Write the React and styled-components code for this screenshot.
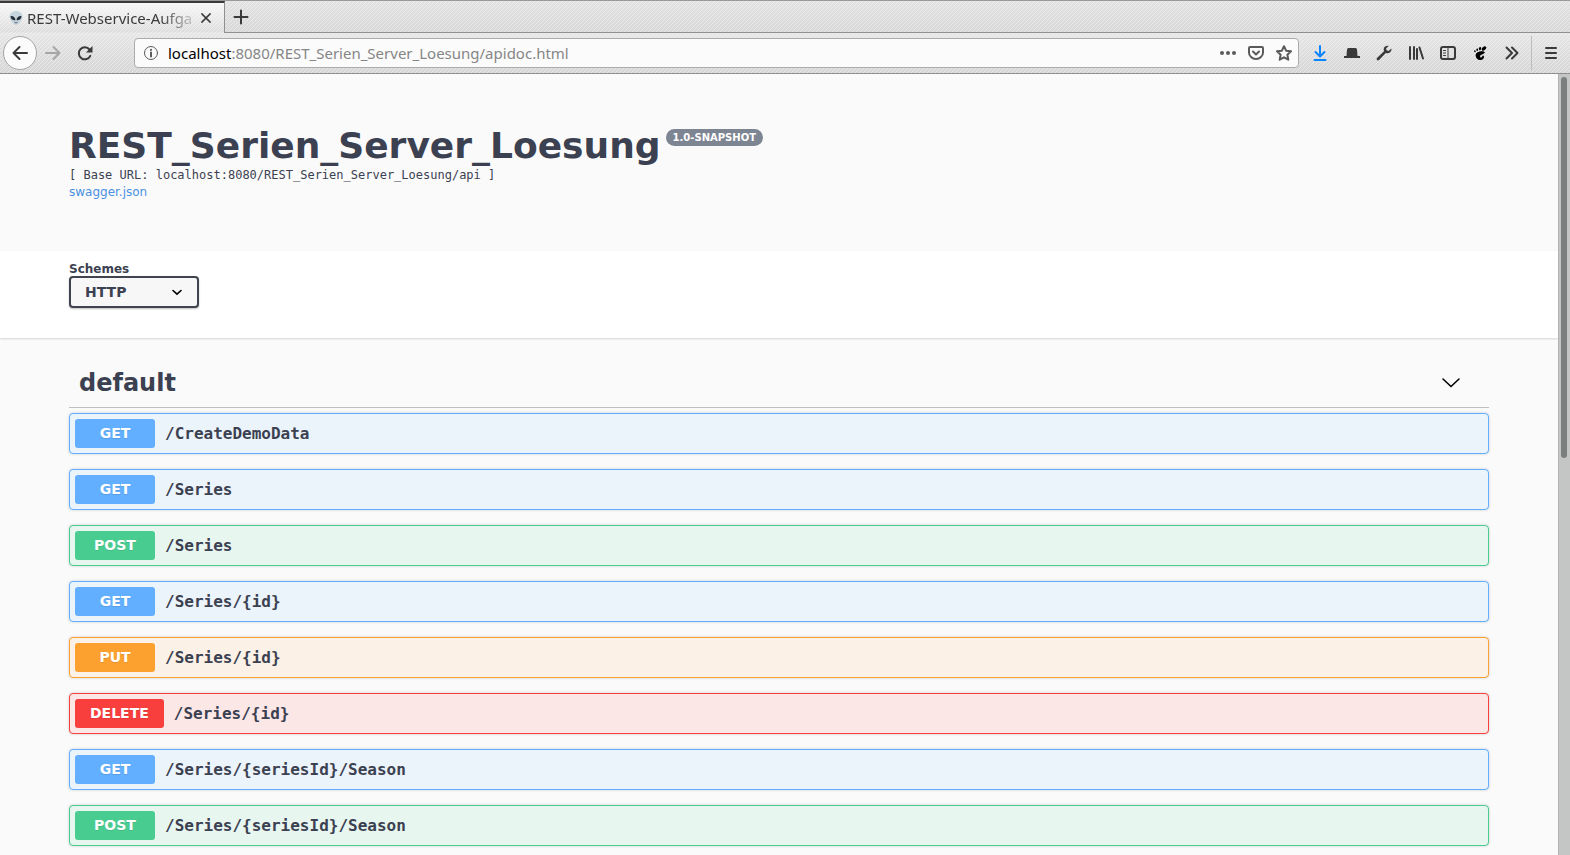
import React from "react";
import styled, { createGlobalStyle } from "styled-components";

const sans = '"DejaVu Sans", sans-serif';
const mono = '"DejaVu Sans Mono", monospace';
const chromeFont = '"Noto Sans", sans-serif';

const GlobalStyle = createGlobalStyle`
  *, *::before, *::after { box-sizing: border-box; }
  body { margin: 0; background: #fafafa; color: #3b4151; font-family: ${sans}; overflow: hidden; }
  h1, h2, p { margin: 0; }
  button { border: 0; padding: 0; background: none; color: inherit; font: inherit; cursor: pointer; }
  svg { display: block; flex: none; }
`;

const Browser = styled.div`
  height: 100vh;
  display: flex;
  flex-direction: column;
`;

const Chrome = styled.header`
  flex: none;
  color: #3a3a3a;
  font-family: ${chromeFont};
  border-bottom: 1px solid #8f8f8f;
  background:
    linear-gradient(135deg, transparent 40%, rgba(255, 255, 255, 0.4) 40% 60%, transparent 60%) 0 0 / 4px 4px,
    linear-gradient(#e2e2e2, #d8d8d8 32px, #e6e6e6 33px, #d6d6d6);
`;

const TabStrip = styled.div`
  display: flex;
  height: 33px;
  border-top: 1px solid #9a9a9a;
`;

const Tab = styled.div`
  width: 225px;
  display: flex;
  align-items: center;
  gap: 4px;
  padding: 0 10px 0 9px;
  border-top: 2px solid #3a3a3a;
  border-right: 1px solid #8f8f8f;
  background: linear-gradient(rgba(255, 255, 255, 0.7), rgba(255, 255, 255, 0.1));
`;

const TabTitle = styled.span`
  flex: 1;
  min-width: 0;
  white-space: nowrap;
  font-size: 15px;
  line-height: 20px;
  mask-image: linear-gradient(to right, #000 132px, transparent 174px);
`;

const TabTools = styled.div`
  flex: 1;
  display: flex;
  align-items: center;
  padding-left: 7px;
  border-bottom: 1px solid #8f8f8f;
`;

const IconButton = styled.button`
  display: grid;
  place-items: center;
  width: ${(p) => p.$width || 32}px;
  height: 32px;
  color: ${(p) => p.$color || "#3a3a3a"};
`;

const TabClose = styled(IconButton)`
  width: 16px;
  height: 20px;
`;

const NavBar = styled.div`
  display: flex;
  align-items: center;
  height: 40px;
  padding: 0 3px;
`;

const BackButton = styled(IconButton)`
  width: 34px;
  height: 34px;
  border: 1px solid #a5a5a5;
  border-radius: 50%;
  background: #fbfbfb;
`;

const AddressBar = styled.div`
  flex: 1;
  min-width: 0;
  display: flex;
  align-items: center;
  height: 30px;
  margin: 0 5px 0 33px;
  padding-left: 8px;
  border: 1px solid #ababab;
  border-radius: 4px;
  background: #fbfbfb;
  color: #5a5a5a;
`;

const Address = styled.p`
  flex: 1;
  min-width: 0;
  overflow: hidden;
  white-space: nowrap;
  margin-left: 9px;
  font-size: 15px;
  line-height: 20px;
  color: #868686;

  b { font-weight: 400; color: #000; }
`;

const Divider = styled.span`
  width: 1px;
  height: 34px;
  margin: 0 3px;
  background: #bcbcbc;
`;

const Viewport = styled.div`
  flex: 1;
  min-height: 0;
  display: flex;
`;

const Page = styled.main`
  flex: 1;
  min-width: 0;
  overflow: hidden;
`;

const ScrollTrack = styled.div`
  width: 12px;
  flex: none;
  padding: 3px 2px 0;
  border-left: 1px solid #b2b4b3;
  background: #c4c6c5;
`;

const ScrollThumb = styled.div`
  width: 6px;
  height: 49%;
  border-radius: 3px;
  background: #7b7f7e;
`;

const Wrapper = styled.div`
  max-width: 1460px;
  margin: 0 auto;
  padding: 0 20px;
`;

const Info = styled(Wrapper)`
  padding-top: 50px;
  padding-bottom: 50px;
`;

const TitleRow = styled.div`
  display: flex;
  align-items: flex-start;
  gap: 5px;
`;

const Title = styled.h1`
  font-size: 36px;
  line-height: 43px;
`;

const Version = styled.span`
  margin-top: 5px;
  padding: 2px 7px;
  border-radius: 9px;
  background: #7d8492;
  color: #fff;
  font-size: 10px;
  font-weight: 700;
  line-height: 13px;
`;

const BaseUrl = styled.p`
  font-family: ${mono};
  font-size: 12px;
  line-height: 16px;
`;

const SpecLink = styled.a`
  display: block;
  width: fit-content;
  color: #4990e2;
  font-size: 12px;
  line-height: 18px;
  text-decoration: none;
`;

const SchemeBar = styled.section`
  padding: 12px 0 30px;
  background: #fff;
  box-shadow: 0 1px 2px rgba(0, 0, 0, 0.15);
`;

const SchemeLabel = styled.label`
  display: flex;
  flex-direction: column;
  align-items: flex-start;
  font-size: 12px;
  font-weight: 700;
  line-height: 13px;
`;

const SelectBox = styled.span`
  display: grid;
  align-items: center;

  > * { grid-area: 1 / 1; }
  > svg { justify-self: end; margin-right: 12px; pointer-events: none; }
`;

const Select = styled.select`
  width: 130px;
  height: 32px;
  padding: 0 14px;
  appearance: none;
  border: 2px solid #41444e;
  border-radius: 4px;
  background: #f7f7f7;
  box-shadow: 0 1px 2px rgba(0, 0, 0, 0.25);
  color: #3b4151;
  font: 700 14px ${sans};
`;

const TagHeader = styled.button`
  display: flex;
  align-items: center;
  justify-content: space-between;
  width: 100%;
  height: 50px;
  margin: 20px 0 5px;
  padding: 0 28px 0 10px;
  border-bottom: 1px solid #bfbfbf;
  text-align: left;
`;

const TagName = styled.h2`
  font-size: 24px;
  line-height: 30px;
`;

const OperationList = styled.div`
  display: flex;
  flex-direction: column;
  gap: 15px;
`;

const palette = {
  GET: ["#61affe", "#ebf3fb"],
  POST: ["#49cc90", "#e8f6f0"],
  PUT: ["#fca130", "#fbf1e6"],
  DELETE: ["#f93e3e", "#fce7e7"],
};

const OperationRow = styled.button`
  display: flex;
  align-items: center;
  gap: 10px;
  padding: 5px;
  border: 1px solid ${(p) => palette[p.$method][0]};
  border-radius: 4px;
  background: ${(p) => palette[p.$method][1]};
  box-shadow: 0 0 3px rgba(0, 0, 0, 0.19);
`;

const Method = styled.span`
  min-width: 80px;
  padding: 6px 15px;
  border-radius: 3px;
  background: ${(p) => palette[p.$method][0]};
  color: #fff;
  font-size: 14px;
  font-weight: 700;
  line-height: 17px;
  text-align: center;
  text-shadow: 0 1px 0 rgba(0, 0, 0, 0.1);
`;

const Path = styled.span`
  font-family: ${mono};
  font-size: 16px;
  font-weight: 700;
  line-height: 19px;
`;

const operations = [
  ["GET", "/CreateDemoData"],
  ["GET", "/Series"],
  ["POST", "/Series"],
  ["GET", "/Series/{id}"],
  ["PUT", "/Series/{id}"],
  ["DELETE", "/Series/{id}"],
  ["GET", "/Series/{seriesId}/Season"],
  ["POST", "/Series/{seriesId}/Season"],
];

const Icon = ({ size = 16, children, fill, width = 2 }) => (
  <svg
    width={size}
    height={size}
    viewBox="0 0 16 16"
    aria-hidden="true"
    fill={fill ? "currentColor" : "none"}
    stroke={fill ? "none" : "currentColor"}
    strokeWidth={width}
    strokeLinecap="round"
    strokeLinejoin="round"
  >
    {children}
  </svg>
);

const AlienIcon = () => (
  <svg width="14" height="14" viewBox="0 0 14 14" aria-hidden="true">
    <path d="M7 0C3 0 .5 2.400.5 5.700 .5 9 4.500 14 7 14s6.500-5 6.500-8.300C13.500 2.400 11 0 7 0z" fill="#c6d4dd" />
    <path d="M1.500 5.200c2.300-.5 4.700 1 5 4-2.700.4-4.900-1.200-5-4zM12.500 5.200c-2.300-.5-4.700 1-5 4 2.700.4 4.900-1.200 5-4z" fill="#263039" />
    <path d="M5.500 11.500q1.500.8 3 0" stroke="#5b6b76" fill="none" />
  </svg>
);

const toolbar = [
  ["Downloads", "#0a84ff", <Icon><path d="M8 1v10M3.500 7 8 11.500 12.500 7M2.500 15h11" /></Icon>],
  ["Extension", "#3a3a3a", <Icon fill><path d="M2.500 11 3 4.500Q3.100 3 4.500 3h7Q12.900 3 13 4.500l.5 6.500H16v2H0v-2z" /></Icon>],
  ["Developer tools", "#3a3a3a", <Icon fill><path d="M15.300 3.400 12.600 5.900 10.600 5.300 10.100 3.400 12.600.900C10.200.3 7.600 1.900 7.700 4.500L8 6.200 1 12.900C-.2 14.400 1.600 16.200 3.100 15L9.800 8.100C12.800 9.200 16.200 6.700 15.300 3.400z" /></Icon>],
  ["Library", "#3a3a3a", <Icon><path d="M2 2v12M6 2v12M9 4v10M11.500 2.500l3.500 11" /></Icon>],
  ["Sidebar", "#3a3a3a", <Icon><rect x="1" y="2" width="14" height="12" rx="2" /><path d="M8 2v12" strokeWidth="1" /><path d="M3.500 5.500h2M3.500 8h2M3.500 10.500h2" strokeWidth="1" /></Icon>],
  ["GNOME extensions", "#000", <Icon fill size={14}><ellipse cx="12.500" cy="2.800" rx="3" ry="1.900" transform="rotate(-40 12.500 2.800)" /><ellipse cx="8" cy="3" rx="1.200" ry="1.800" transform="rotate(15 8 3)" /><ellipse cx="4.800" cy="4.300" rx="1" ry="1.500" /><ellipse cx="2.200" cy="6" rx=".9" ry="1.200" transform="rotate(-20 2.200 6)" /><path d="M12.500 6.300C8.500 5 3 7 3 10.500 3 13.500 5.500 16 8.500 16c3 0 4.500-2.500 4-4.300-.4-1.200-1.800-.9-2 .2-.3 1.500-2.200 1.700-2.500.2C7.700 9.800 14 9 13.500 7.200z" /></Icon>],
  ["More tools", "#3a3a3a", <Icon><path d="M2.500 2.500 8 8l-5.500 5.500M8 2.500 13.500 8 8 13.500" /></Icon>],
];

export default function App() {
  return (
    <Browser>
      <GlobalStyle />
      <Chrome>
        <TabStrip>
          <Tab>
            <AlienIcon />
            <TabTitle>REST-Webservice-Aufga</TabTitle>
            <TabClose aria-label="Close tab">
              <Icon size={12}><path d="M2.500 2.500l11 11M13.500 2.500l-11 11" /></Icon>
            </TabClose>
          </Tab>
          <TabTools>
            <IconButton aria-label="New tab" $width={18}>
              <Icon><path d="M8 1.500v13M1.500 8h13" /></Icon>
            </IconButton>
          </TabTools>
        </TabStrip>
        <NavBar>
          <BackButton aria-label="Back"><Icon><path d="M15 8H1.500M7.500 2 1.500 8l6 6" /></Icon></BackButton>
          <IconButton aria-label="Forward" $color="#a6a6a6"><Icon><path d="M1 8h13.500M8.500 2l6 6-6 6" /></Icon></IconButton>
          <IconButton aria-label="Reload"><Icon><path d="M13.300 10.800A6 6 0 1 1 12.500 4.500" /><path d="M15.500 1v6.500H9z" fill="currentColor" stroke="none" /></Icon></IconButton>
          <AddressBar>
            <Icon width={1}><circle cx="8" cy="8" r="6.500" /><path d="M8 7.500v4M8 4.800v.2" strokeWidth="2" /></Icon>
            <Address><b>localhost</b>:8080/REST_Serien_Server_Loesung/apidoc.html</Address>
            <IconButton aria-label="Page actions" $width={28} $color="#5a5a5a"><Icon fill><circle cx="2" cy="8" r="2" /><circle cx="8" cy="8" r="2" /><circle cx="14" cy="8" r="2" /></Icon></IconButton>
            <IconButton aria-label="Save to Pocket" $width={28} $color="#5a5a5a"><Icon><path d="M2 2h12q1 0 1 1v4.500a7 6.500 0 0 1-14 0V3q0-1 1-1z" /><path d="M5 6.500 8 9.500l3-3" /></Icon></IconButton>
            <IconButton aria-label="Bookmark" $width={28} $color="#5a5a5a"><Icon><path d="m8 1.200 2.100 4.500 4.900.6-3.600 3.400.9 5L8 12.300l-4.300 2.400.9-5L1 6.300l4.900-.6z" /></Icon></IconButton>
          </AddressBar>
          {toolbar.map(([label, color, icon]) => (
            <IconButton key={label} aria-label={label} $color={color}>{icon}</IconButton>
          ))}
          <Divider />
          <IconButton aria-label="Menu"><Icon><path d="M3 3h10M3 8h10M3 13h10" /></Icon></IconButton>
        </NavBar>
      </Chrome>
      <Viewport>
        <Page>
          <Info>
            <TitleRow>
              <Title>REST_Serien_Server_Loesung</Title>
              <Version>1.0-SNAPSHOT</Version>
            </TitleRow>
            <BaseUrl>[ Base URL: localhost:8080/REST_Serien_Server_Loesung/api ]</BaseUrl>
            <SpecLink href="#swagger">swagger.json</SpecLink>
          </Info>
          <SchemeBar>
            <Wrapper>
              <SchemeLabel>
                Schemes
                <SelectBox>
                  <Select defaultValue="HTTP"><option>HTTP</option></Select>
                  <svg width="20" height="20" viewBox="0 0 20 20" fill="none" stroke="#000" strokeWidth="1.600" strokeLinecap="round" aria-hidden="true"><path d="m6 8.500 4 3.700 4-3.700" /></svg>
                </SelectBox>
              </SchemeLabel>
            </Wrapper>
          </SchemeBar>
          <Wrapper>
            <TagHeader aria-expanded="true">
              <TagName>default</TagName>
              <svg width="20" height="20" viewBox="0 0 20 20" fill="none" stroke="#000" strokeWidth="1.600" strokeLinecap="round" aria-hidden="true"><path d="m2 6 8 7.500L18 6" /></svg>
            </TagHeader>
            <OperationList>
              {operations.map(([method, path]) => (
                <OperationRow key={method + path} $method={method}>
                  <Method $method={method}>{method}</Method>
                  <Path>{path}</Path>
                </OperationRow>
              ))}
            </OperationList>
          </Wrapper>
        </Page>
        <ScrollTrack><ScrollThumb /></ScrollTrack>
      </Viewport>
    </Browser>
  );
}
